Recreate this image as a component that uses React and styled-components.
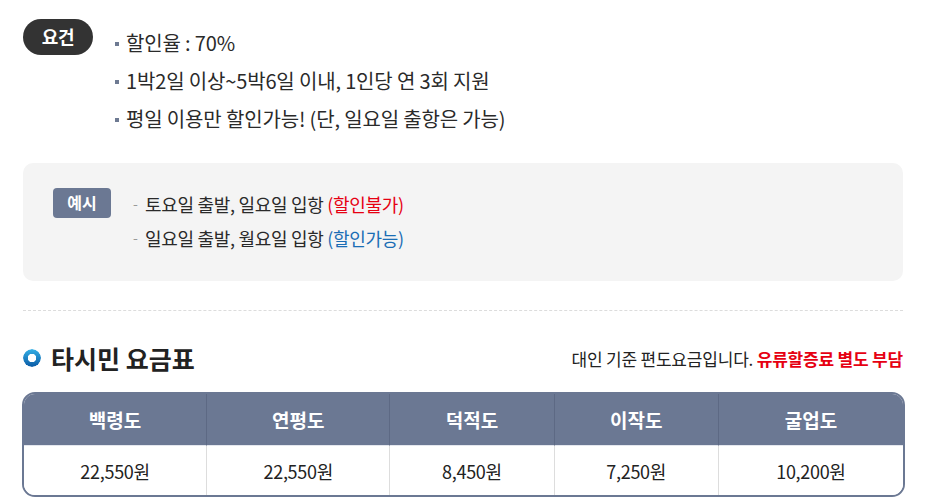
import styled, { createGlobalStyle } from 'styled-components'

const GlobalStyle = createGlobalStyle`
    body {
        margin: 0;
        background: #fff;
        font-family: 'Noto Sans CJK KR', 'Noto Sans', sans-serif;
        color: #2a2a2a;
    }
`

const conditions = [
    '할인율 : 70%',
    '1박2일 이상~5박6일 이내, 1인당 연 3회 지원',
    '평일 이용만 할인가능! (단, 일요일 출항은 가능)',
]

const examples = [
    { text: '토요일 출발, 일요일 입항 ', note: '(할인불가)', tone: 'red' },
    { text: '일요일 출발, 월요일 입항 ', note: '(할인가능)', tone: 'blue' },
]

const fares = [
    { island: '백령도', price: '22,550원' },
    { island: '연평도', price: '22,550원' },
    { island: '덕적도', price: '8,450원' },
    { island: '이작도', price: '7,250원' },
    { island: '굴업도', price: '10,200원' },
]

export default function App() {
    return (
        <>
            <GlobalStyle />
            <Page>
                <Conditions>
                    <Pill>요건</Pill>
                    <BulletList>
                        {conditions.map(item => (
                            <Bullet key={item}>{item}</Bullet>
                        ))}
                    </BulletList>
                </Conditions>

                <ExampleBox>
                    <Badge>예시</Badge>
                    <DashList>
                        {examples.map(item => (
                            <Dash key={item.text}>
                                {item.text}
                                <Note $tone={item.tone}>{item.note}</Note>
                            </Dash>
                        ))}
                    </DashList>
                </ExampleBox>

                <Divider />

                <TitleRow>
                    <Title>
                        <Ring />
                        타시민 요금표
                    </Title>
                    <Caption>
                        대인 기준 편도요금입니다. <Strong>유류할증료 별도 부담</Strong>
                    </Caption>
                </TitleRow>

                <FareTable>
                    {fares.map((fare, i) => (
                        <HeadCell key={fare.island} $first={i === 0}>
                            {fare.island}
                        </HeadCell>
                    ))}
                    {fares.map((fare, i) => (
                        <BodyCell key={fare.island + fare.price} $first={i === 0}>
                            {fare.price}
                        </BodyCell>
                    ))}
                </FareTable>
            </Page>
        </>
    )
}

const Page = styled.div`
    width: 880px;
    padding: 19px 0 0 23px;
`

const Conditions = styled.div`
    display: flex;
    align-items: flex-start;
    gap: 22px;
`

const Pill = styled.div`
    width: 70px;
    height: 36px;
    border-radius: 18px;
    background: #333;
    color: #fff;
    font-size: 18px;
    font-weight: 700;
    line-height: 34px;
    text-align: center;
    letter-spacing: -0.3px;
`

const BulletList = styled.ul`
    list-style: none;
    margin: 5px 0 0;
    padding: 0;
`

const Bullet = styled.li`
    position: relative;
    padding-left: 11px;
    font-size: 20px;
    line-height: 38px;
    letter-spacing: -0.15px;

    &::before {
        content: '';
        position: absolute;
        left: 0;
        top: 18px;
        width: 4px;
        height: 4px;
        background: #6e7a92;
    }
`

const ExampleBox = styled.div`
    display: flex;
    align-items: flex-start;
    gap: 22px;
    margin-top: 25px;
    padding: 25px 30px 26px;
    background: #f4f4f4;
    border-radius: 10px;
`

const Badge = styled.div`
    width: 58px;
    height: 30px;
    border-radius: 4px;
    background: #6b7893;
    color: #fff;
    font-size: 16px;
    font-weight: 700;
    line-height: 29px;
    text-align: center;
`

const DashList = styled.ul`
    list-style: none;
    margin: -1px 0 0;
    padding: 0;
`

const Dash = styled.li`
    position: relative;
    padding-left: 12px;
    font-size: 18px;
    line-height: 34px;
    letter-spacing: -0.3px;

    &::before {
        content: '-';
        position: absolute;
        left: 0;
        top: -1px;
        color: #999;
        font-size: 14px;
    }
`

const Note = styled.span`
    color: ${({ $tone }) => ($tone === 'red' ? '#e60012' : '#1a6db5')};
`

const Divider = styled.hr`
    margin: 29px 0 0;
    border: none;
    border-top: 1px dashed #dcdcdc;
`

const TitleRow = styled.div`
    display: flex;
    align-items: center;
    justify-content: space-between;
    margin-top: 30px;
    height: 34px;
`

const Title = styled.h2`
    display: flex;
    align-items: center;
    gap: 10px;
    margin: 0;
    font-size: 25px;
    font-weight: 700;
    color: #222;
    letter-spacing: 0;
`

const Ring = styled.span`
    width: 18px;
    height: 18px;
    border-radius: 50%;
    background: linear-gradient(180deg, #35b0e6 0%, #0a5aa5 100%);
    -webkit-mask: radial-gradient(circle, transparent 4px, #000 4.5px);
    mask: radial-gradient(circle, transparent 4px, #000 4.5px);
`

const Caption = styled.p`
    margin: 0;
    font-size: 17px;
    color: #222;
    letter-spacing: -0.2px;
`

const Strong = styled.strong`
    color: #e60012;
    font-weight: 700;
`

const FareTable = styled.div`
    display: grid;
    grid-template-columns: 183fr 184fr 165fr 165fr 186fr;
    grid-template-rows: 52px 49px;
    margin: 17px 0 0 -1px;
    width: 883px;
    border: 2px solid #6b7893;
    border-radius: 13px;
    overflow: hidden;
    box-sizing: border-box;
`

const HeadCell = styled.div`
    display: flex;
    align-items: center;
    justify-content: center;
    background: #6b7893;
    color: #fff;
    font-size: 19px;
    font-weight: 700;
    border-left: ${({ $first }) => ($first ? 'none' : '1px solid #5d6984')};
    border-bottom: 1px solid #e4e7ee;
`

const BodyCell = styled.div`
    display: flex;
    align-items: center;
    justify-content: center;
    background: #fff;
    color: #222;
    font-size: 18px;
    border-left: ${({ $first }) => ($first ? 'none' : '1px solid #dddddd')};
    letter-spacing: -0.3px;
`
